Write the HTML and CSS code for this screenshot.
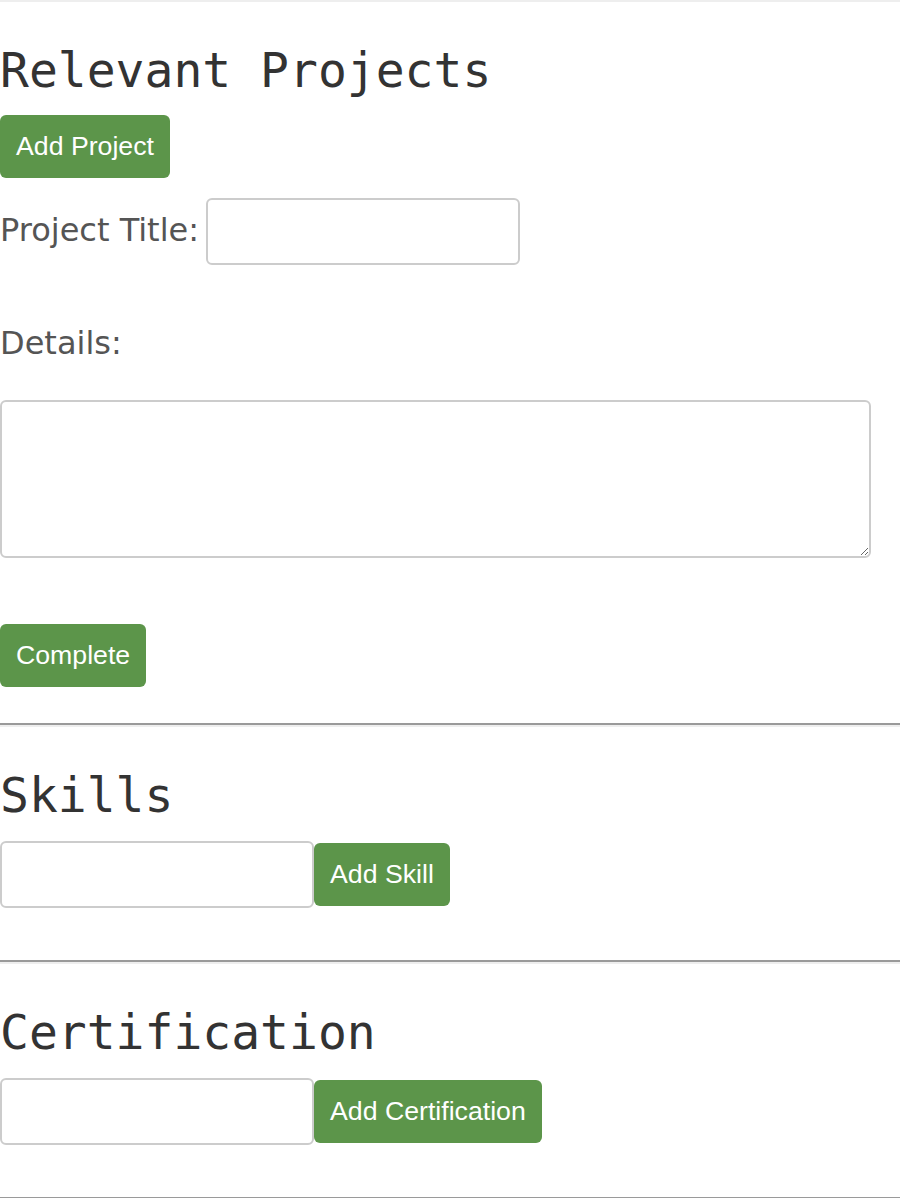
FILE: index.html
```html
<!DOCTYPE html>
<html lang="en">
<head>
<meta charset="utf-8">
<title>Resume Builder</title>
<link rel="stylesheet" href="styles.css">
</head>
<body>
<div class="topline"></div>
<section class="section">
  <h2 class="heading">Relevant Projects</h2>
  <button class="btn btn-first">Add Project</button>
  <div class="field-row">
    <label class="label label-inline" for="ptitle">Project Title:</label>
    <input class="input input-title" id="ptitle" type="text">
  </div>
  <label class="label label-block" for="pdetails">Details:</label>
  <textarea class="textarea" id="pdetails"></textarea>
  <button class="btn btn-complete">Complete</button>
</section>
<hr class="divider divider-a">
<section class="section">
  <h2 class="heading">Skills</h2>
  <div class="add-row">
    <input class="input input-add" type="text">
    <button class="btn">Add Skill</button>
  </div>
</section>
<hr class="divider divider-b">
<section class="section">
  <h2 class="heading">Certification</h2>
  <div class="add-row">
    <input class="input input-add" type="text">
    <button class="btn">Add Certification</button>
  </div>
</section>
<hr class="divider divider-b">
</body>
</html>
```

FILE: styles.css
```css
html, body {
  margin: 0;
  padding: 0;
  background: #ffffff;
}

body {
  font-family: "DejaVu Sans", Verdana, sans-serif;
  color: #555555;
}

.topline {
  height: 0;
  border-bottom: 2px solid #eeeeee;
}

.section {
  padding-top: 40px;
  display: flex;
  flex-direction: column;
  align-items: flex-start;
}

.heading {
  margin: 0;
  font-family: "DejaVu Sans Mono", monospace;
  font-weight: normal;
  font-size: 48px;
  line-height: 56px;
  color: #333333;
}

.btn {
  height: 63px;
  padding: 0 16px;
  margin: 0;
  border: none;
  border-radius: 6px;
  background: #5c954a;
  color: #ffffff;
  font-family: "Liberation Sans", Arial, sans-serif;
  font-size: 26.7px;
  line-height: 63px;
  cursor: pointer;
}

.btn-first {
  margin-top: 17px;
}

.field-row {
  display: flex;
  align-items: center;
  gap: 5px;
  margin-top: 20px;
}

.label {
  font-family: "DejaVu Sans", Verdana, sans-serif;
  font-size: 32px;
  line-height: 37px;
  color: #555555;
}

.label-inline {
  padding-bottom: 2px;
  width: 201px;
}

.label-block {
  display: block;
  margin-top: 60px;
}

.input {
  box-sizing: border-box;
  height: 67px;
  margin: 0;
  border: 2px solid #cccccc;
  border-radius: 6px;
  background: #ffffff;
  font-size: 26px;
  padding: 0 10px;
}

.input-title {
  width: 314px;
}

.input-add {
  width: 314px;
}

.textarea {
  box-sizing: border-box;
  display: block;
  width: 871px;
  height: 158px;
  margin: 38px 0 0 0;
  border: 2px solid #cccccc;
  border-radius: 6px;
  background: #ffffff;
  font-size: 26px;
}

.btn-complete {
  margin-top: 66px;
}

.add-row {
  display: flex;
  align-items: center;
  margin-top: 18px;
}

.divider {
  height: 0;
  margin: 0;
  border: none;
  border-top: 2px solid #9a9a9a;
  border-bottom: 2px solid #eeeeee;
}

.divider-a {
  margin-top: 36px;
}

.divider-b {
  margin-top: 52px;
}
```
